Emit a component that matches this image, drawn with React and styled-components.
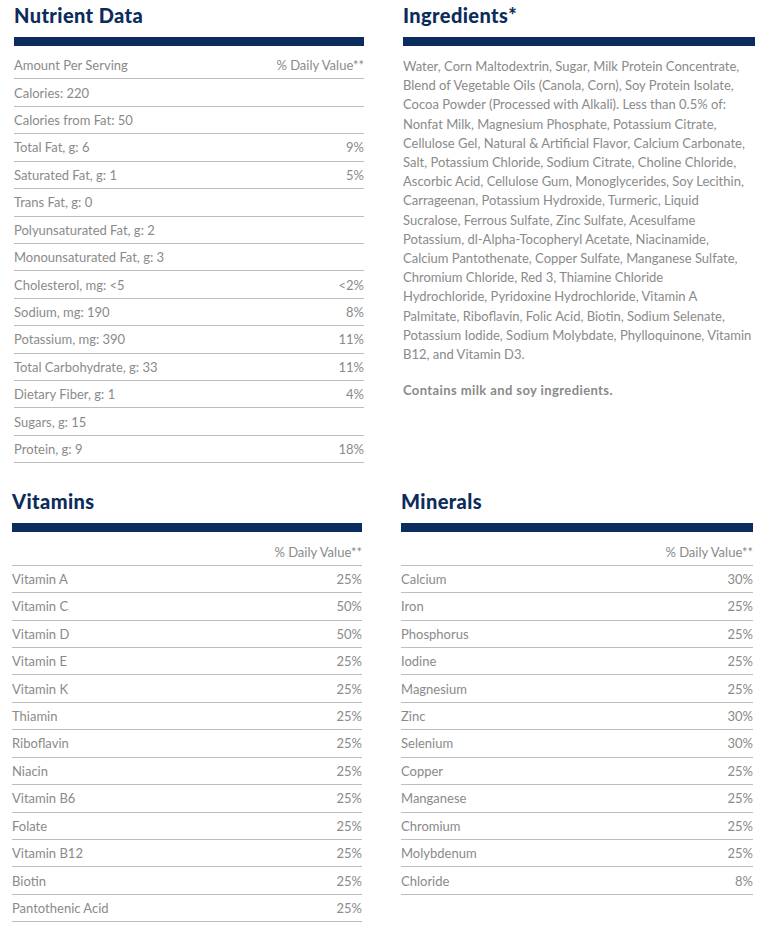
import React from "react";
import styled, { createGlobalStyle } from "styled-components";

const nutrients = [
  ["Calories: 220", ""],
  ["Calories from Fat: 50", ""],
  ["Total Fat, g: 6", "9%"],
  ["Saturated Fat, g: 1", "5%"],
  ["Trans Fat, g: 0", ""],
  ["Polyunsaturated Fat, g: 2", ""],
  ["Monounsaturated Fat, g: 3", ""],
  ["Cholesterol, mg: <5", "<2%"],
  ["Sodium, mg: 190", "8%"],
  ["Potassium, mg: 390", "11%"],
  ["Total Carbohydrate, g: 33", "11%"],
  ["Dietary Fiber, g: 1", "4%"],
  ["Sugars, g: 15", ""],
  ["Protein, g: 9", "18%"],
];

const vitamins = [
  ["Vitamin A", "25%"],
  ["Vitamin C", "50%"],
  ["Vitamin D", "50%"],
  ["Vitamin E", "25%"],
  ["Vitamin K", "25%"],
  ["Thiamin", "25%"],
  ["Riboflavin", "25%"],
  ["Niacin", "25%"],
  ["Vitamin B6", "25%"],
  ["Folate", "25%"],
  ["Vitamin B12", "25%"],
  ["Biotin", "25%"],
  ["Pantothenic Acid", "25%"],
];

const minerals = [
  ["Calcium", "30%"],
  ["Iron", "25%"],
  ["Phosphorus", "25%"],
  ["Iodine", "25%"],
  ["Magnesium", "25%"],
  ["Zinc", "30%"],
  ["Selenium", "30%"],
  ["Copper", "25%"],
  ["Manganese", "25%"],
  ["Chromium", "25%"],
  ["Molybdenum", "25%"],
  ["Chloride", "8%"],
];

// broken where the label breaks
const ingredientLines = [
  "Water, Corn Maltodextrin, Sugar, Milk Protein Concentrate,",
  "Blend of Vegetable Oils (Canola, Corn), Soy Protein Isolate,",
  "Cocoa Powder (Processed with Alkali). Less than 0.5% of:",
  "Nonfat Milk, Magnesium Phosphate, Potassium Citrate,",
  "Cellulose Gel, Natural & Artificial Flavor, Calcium Carbonate,",
  "Salt, Potassium Chloride, Sodium Citrate, Choline Chloride,",
  "Ascorbic Acid, Cellulose Gum, Monoglycerides, Soy Lecithin,",
  "Carrageenan, Potassium Hydroxide, Turmeric, Liquid",
  "Sucralose, Ferrous Sulfate, Zinc Sulfate, Acesulfame",
  "Potassium, dl-Alpha-Tocopheryl Acetate, Niacinamide,",
  "Calcium Pantothenate, Copper Sulfate, Manganese Sulfate,",
  "Chromium Chloride, Red 3, Thiamine Chloride",
  "Hydrochloride, Pyridoxine Hydrochloride, Vitamin A",
  "Palmitate, Riboflavin, Folic Acid, Biotin, Sodium Selenate,",
  "Potassium Iodide, Sodium Molybdate, Phylloquinone, Vitamin",
  "B12, and Vitamin D3.",
];

function FactTable({ head, rows }) {
  return (
    <Table>
      <Row>
        <span>{head}</span>
        <span>% Daily Value**</span>
      </Row>
      {rows.map(([name, dv]) => (
        <Row key={name}>
          <span>{name}</span>
          <span>{dv}</span>
        </Row>
      ))}
    </Table>
  );
}

export default function App() {
  return (
    <>
      <GlobalStyle />
      <Page>
        <Section $inset={14}>
          <Column>
            <Heading>Nutrient Data</Heading>
            <Bar />
            <FactTable head="Amount Per Serving" rows={nutrients} />
          </Column>
          <Column>
            <Heading>Ingredients*</Heading>
            <Bar />
            <Paragraph>
              {ingredientLines.map((line) => (
                <Line key={line}>{line}</Line>
              ))}
            </Paragraph>
            <Paragraph $bold>Contains milk and soy ingredients.</Paragraph>
          </Column>
        </Section>
        <Section $inset={12} $top={23}>
          <Column>
            <Heading>Vitamins</Heading>
            <Bar />
            <FactTable head="" rows={vitamins} />
          </Column>
          <Column>
            <Heading>Minerals</Heading>
            <Bar />
            <FactTable head="" rows={minerals} />
          </Column>
        </Section>
      </Page>
    </>
  );
}

const GlobalStyle = createGlobalStyle`
  body {
    margin: 0;
    background: #fff;
    font-family: Lato, "Open Sans", sans-serif;
  }
`;

const Page = styled.div`
  width: 768px;
  padding-bottom: 16px;
`;

const Section = styled.section`
  display: grid;
  grid-template-columns: 350px 352px;
  column-gap: 39px;
  align-items: start;
  padding-left: ${(p) => p.$inset}px;
  margin-top: ${(p) => p.$top || 0}px;
`;

const Column = styled.div`
  display: flex;
  flex-direction: column;
`;

const Heading = styled.h2`
  margin: 0 0 7px;
  font-size: 20px;
  line-height: 30px;
  font-weight: 900;
  letter-spacing: 0.4px;
  color: #0c2c5c;
`;

const Bar = styled.div`
  height: 9px;
  background: #0b2c5f;
`;

const Table = styled.div`
  margin-top: 6px;
`;

const Row = styled.div`
  box-sizing: border-box;
  height: 27.43px;
  display: flex;
  align-items: center;
  justify-content: space-between;
  border-bottom: 1px solid #bdbdbd;
  font-size: 13px;
  color: #8a8a8a;
`;

const Paragraph = styled.p`
  margin: ${(p) => (p.$bold ? "17px" : "11px")} 0 0;
  font-size: 13px;
  line-height: 19.2px;
  letter-spacing: ${(p) => (p.$bold ? "0.4px" : "0")};
  color: #8a8a8a;
  font-weight: ${(p) => (p.$bold ? 700 : 400)};
`;

const Line = styled.span`
  display: block;
  white-space: nowrap;
`;
